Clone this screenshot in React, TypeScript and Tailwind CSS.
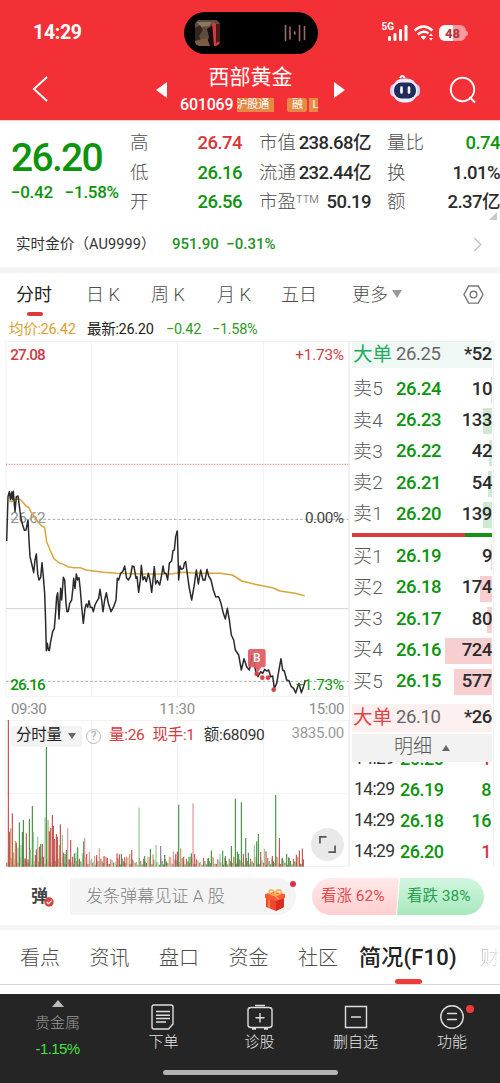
import type { ReactNode } from 'react'

const asks = [
  { label: '卖5', price: '26.24', qty: 10, bar: 1 },
  { label: '卖4', price: '26.23', qty: 133, bar: 9 },
  { label: '卖3', price: '26.22', qty: 42, bar: 3 },
  { label: '卖2', price: '26.21', qty: 54, bar: 4 },
  { label: '卖1', price: '26.20', qty: 139, bar: 9 },
]

const bids = [
  { label: '买1', price: '26.19', qty: 9, bar: 1 },
  { label: '买2', price: '26.18', qty: 174, bar: 12 },
  { label: '买3', price: '26.17', qty: 80, bar: 5 },
  { label: '买4', price: '26.16', qty: 724, bar: 47 },
  { label: '买5', price: '26.15', qty: 577, bar: 38 },
]

const ticks = [
  { price: '26.20', qty: 1, up: true },
  { price: '26.19', qty: 8, up: false },
  { price: '26.18', qty: 16, up: false },
  { price: '26.20', qty: 1, up: true },
]

// chart units: 3 per css pixel
const priceMorning =
  '20,213 24,80 28,65 31,88 35,66 37,88 40,64 42,90 45,125 49,80 54,78 57,100 60,125 64,150 68,165 73,181 78,180 82,160 84,150 87,210 90,260 96,285 101,308 105,270 109,252 113,310 117,330 122,322 126,278 130,320 134,370 137,460 139,542 142,520 145,540 148,542 152,515 158,485 163,475 167,425 170,380 173,368 177,447 180,390 182,355 185,390 190,322 194,330 198,400 201,425 205,424 209,400 215,390 219,352 221,325 225,355 229,312 233,330 237,323 241,360 245,410 250,460 255,415 259,402 263,412 267,392 271,412 276,412 280,425 285,405 290,395 296,385 300,358 305,390 309,425 314,390 319,368 325,400 333,425 341,410 348,390 352,325 356,330 362,310 368,305 374,288 380,325 385,330 391,320 397,288 402,290 408,325 411,320 416,367 421,330 424,286 429,330 434,320 439,335 445,310 450,330 455,367 460,320 463,290 467,342 472,332 479,345 485,315 489,288 493,310 498,310 503,330 508,280 515,272 519,242 523,240 527,200 532,182'
const priceAfternoon =
  '22,182 26,330 30,288 34,298 40,295 43,280 47,275 53,320 58,355 65,390 72,350 79,300 85,342 92,300 99,330 105,330 111,298 116,318 123,330 130,360 137,380 146,380 153,400 160,430 166,447 172,415 178,450 184,495 191,510 196,540 206,555 214,600 222,566 230,590 238,600 246,557 252,575 258,610 264,620 272,605 278,610 284,598 290,603 296,600 302,620 308,618 313,655 320,640 326,605 333,566 338,600 343,603 350,630 357,632 364,650 371,655 377,669 383,650 387,640 394,668 400,652 406,630'
const average =
  '28,95 32,92 36,95 42,88 60,88 70,98 78,108 86,112 94,128 104,140 115,157 124,167 134,173 140,215 150,240 162,266 178,279 192,284 206,291 222,293 240,293 258,300 280,303 310,307 350,310 400,311 450,312 510,312 550,307 590,310 660,310 697,315 725,333 765,343 820,354 840,363 885,370 914,377'

// [x, height, colour]
const spikes: [number, number, string][] = [
  [25, 440, 'r'], [28, 105, 'r'], [32, 115, 'o'], [37, 160, 'r'], [41, 43, 'o'], [46, 77, 'o'], [49, 72, 'r'], [54, 57, 'l'],
  [58, 133, 'g'], [63, 65, 'l'], [67, 104, 'g'], [70, 140, 'g'], [75, 25, 'r'], [79, 100, 'r'], [84, 22, 'r'], [88, 143, 'g'],
  [91, 52, 'l'], [97, 182, 'g'], [100, 104, 'l'], [106, 35, 'r'], [109, 52, 'r'], [113, 90, 'l'], [118, 60, 'r'], [122, 68, 'g'],
  [127, 68, 'r'], [130, 30, 'r'], [135, 148, 'l'], [139, 362, 'g'], [144, 140, 'o'], [148, 106, 'r'], [152, 116, 'r'],
  [157, 155, 'r'], [160, 122, 'r'], [164, 83, 'r'], [169, 98, 'r'], [172, 90, 'r'], [178, 65, 'o'], [181, 127, 'r'], [187, 96, 'l'],
  [190, 42, 'r'], [195, 38, 'g'], [199, 50, 'g'], [203, 115, 'p'], [208, 22, 'r'], [212, 80, 'r'], [218, 30, 'r'], [223, 40, 'g'],
  [228, 42, 'l'], [233, 58, 'g'], [238, 20, 'r'], [247, 40, 'l'], [251, 76, 'g'], [254, 87, 'p'], [260, 38, 'r'], [268, 45, 'p'],
  [275, 24, 'l'], [284, 32, 'p'], [290, 35, 'r'], [298, 55, 'p'], [312, 32, 'r'], [322, 26, 'r'], [351, 40, 'r'], [358, 37, 'r'],
  [364, 38, 'g'], [374, 28, 'r'], [389, 38, 'o'], [395, 50, 'r'], [417, 177, 'l'], [434, 32, 'g'], [451, 54, 'g'], [459, 37, 'o'],
  [468, 65, 'l'], [482, 62, 'b'], [494, 35, 'g'], [520, 46, 'p'], [527, 38, 'r'], [532, 45, 'r'], [536, 186, 'g'], [542, 55, 'o'],
  [551, 30, 'r'], [567, 30, 'g'], [574, 40, 'g'], [579, 190, 'p'], [584, 38, 'r'], [625, 26, 'g'], [634, 48, 'g'], [660, 38, 'l'],
  [668, 48, 'g'], [676, 32, 'g'], [694, 62, 'g'], [706, 204, 'g'], [712, 45, 'g'], [716, 38, 'g'], [724, 193, 'g'], [730, 38, 'r'],
  [737, 86, 'g'], [745, 42, 'g'], [763, 66, 'l'], [770, 76, 'g'], [775, 98, 'g'], [782, 44, 'r'], [793, 54, 'l'], [798, 46, 'r'],
  [817, 32, 'r'], [827, 215, 'g'], [838, 86, 'r'], [847, 26, 'g'], [860, 38, 'g'], [866, 28, 'g'], [889, 36, 'r'], [898, 48, 'r'], [907, 54, 'r'],
]
const volumeColors: Record<string, string> = {
  r: '#c0504d',
  g: '#3f9140',
  l: '#8fc78f',
  o: '#c9965a',
  p: '#e58f92',
  b: '#7d7aa5',
}
const small = [12, 22, 9, 30, 16, 7, 26, 14, 19, 8, 28, 11, 24, 17, 6]
const smallColors = 'rgrrlgorgrplrgg'

function Arrow({ className, points }: { className: string; points: string }) {
  return (
    <svg viewBox="0 0 12 16" className={className} fill="currentColor">
      <polygon points={points} />
    </svg>
  )
}

function StatusBar() {
  return (
    <div className="flex h-[66px] items-center justify-between pl-[33px] pr-8">
      <span className="w-[150px] text-[19.5px] font-bold tracking-[-0.3px]">14:29</span>
      <div className="flex h-[42px] w-[134px] items-center justify-between rounded-full bg-black pl-[11px] pr-[12px]">
        <svg viewBox="0 0 25 26" className="h-[26px] w-[25px]">
          <defs>
            <clipPath id="cover"><rect width="25" height="26" rx="5" /></clipPath>
          </defs>
          <g clipPath="url(#cover)">
            <rect width="25" height="26" fill="#5e4c3f" />
            <path d="M2 2H17L14 6 5 7Z" fill="#8a7863" />
            <path d="M0 8 5 5 8 10 4 16 7 23 0 26Z" fill="#332621" />
            <path d="M12 9 18 5 19 26H11L14 17Z" fill="#160d0e" />
            <path d="M0 21 12 18 15 26H0Z" fill="#7d5a45" />
            <path d="M17 2 21 4 21 24 25 21V26H19Z" fill="#d5373c" />
            <path d="M21 4h4v18h-4Z" fill="#49191c" />
          </g>
        </svg>
        <svg viewBox="0 0 22 18" className="h-[18px] w-[22px]" strokeWidth="1.6" strokeLinecap="round">
          <path d="M1.500 1.500V16.500M20.500 2.500V15.500" stroke="#8d706b" />
          <path d="M6 3V15M15.500 1.500V16.500" stroke="#a9635a" />
          <path d="M10.700 8V10" stroke="#a78178" />
        </svg>
      </div>
      <div className="flex w-[150px] items-center justify-end">
        <span className="mb-[12px] text-[10px] font-bold leading-none">5G</span>
        <svg viewBox="0 0 22 18" className="-ml-[7px] h-[18px] w-[22px]" fill="white">
          <rect x="1" y="12" width="3" height="5" rx="1" />
          <rect x="6.500" y="9" width="3" height="8" rx="1" />
          <rect x="12" y="5" width="3" height="12" rx="1" />
          <rect x="17.500" y="1" width="3" height="16" rx="1" />
        </svg>
        <svg viewBox="0 0 22 18" className="ml-[4px] h-[18px] w-[22px]" fill="none" stroke="white" strokeWidth="2.600">
          <path d="M1.500 6.500Q10.500-1.500 19.500 6.500M4.800 10.500Q10.500 5.500 15.500 9.500" />
          <path d="M10.500 16 7.500 12.800Q10.500 10.500 13.500 12.800Z" fill="white" stroke="none" />
          <path d="M16 12 18 9.500 20 12ZM16 14 18 16.500 20 14Z" fill="white" stroke="none" />
        </svg>
        <div className="ml-[4px] flex h-[16px] w-[27px] items-center justify-center rounded-[6px] bg-[linear-gradient(90deg,#fff_50%,#f89a9d_50%)] text-[13px] font-extrabold leading-none text-[#bd3438]">48</div>
        <span className="h-[5px] w-[2px] rounded-r bg-[#f89a9d]" />
      </div>
    </div>
  )
}

function Header() {
  return (
    <header className="h-[120px] shrink-0 bg-[#f23035] text-white">
      <StatusBar />
      <div className="flex h-[47px] items-center">
        <svg viewBox="0 0 16 28" className="ml-8 -mt-[2px] h-[28px] w-[16px]" fill="none" stroke="white" strokeWidth="2">
          <path d="M15 2 2 14 15 26" />
        </svg>
        <Arrow className="ml-[108px] h-[16px] w-[12px]" points="11,0 0,8 11,16" />
        <div className="ml-[12px] flex w-[141px] flex-col items-center">
          <h1 className="text-[21px] leading-[24px]">西部黄金</h1>
          <div className="mt-[7px] flex h-[19px] w-full items-center overflow-hidden">
            <span className="text-[16px] font-medium tracking-[-0.2px]">601069</span>
            <span className="ml-[4px] flex h-[14px] w-[37px] justify-end overflow-hidden whitespace-nowrap bg-[#e58a45] pr-[5px] text-[11px] leading-[14px]">沪股通</span>
            <span className="ml-[13px] h-[14px] w-[20px] rounded-[2px] bg-[#e58a45] text-center text-[11px] leading-[14px]">融</span>
            <span className="ml-[2px] h-[14px] w-[9px] bg-[#e58a45] pl-[3px] text-[11px] leading-[14px]">L</span>
          </div>
        </div>
        <Arrow className="ml-[12px] h-[16px] w-[12px]" points="1,0 12,8 1,16" />
        <svg viewBox="0 0 30 30" className="ml-[45px] -mt-[2px] h-[30px] w-[30px]">
          <path d="M10 4Q12 0 15 4" fill="none" stroke="#fff" strokeWidth="2" />
          <rect x="0" y="10" width="30" height="13" rx="5" fill="#cfcafb" />
          <rect x="2.500" y="4.500" width="25" height="24" rx="11" fill="#eeeaff" />
          <rect x="4" y="8.500" width="22" height="16" rx="7.500" fill="#202c59" />
          <path d="M11.500 13.500v5M19 13.500v5" stroke="#fff" strokeWidth="2.600" strokeLinecap="round" />
        </svg>
        <svg viewBox="0 0 28 28" className="ml-[29px] h-[28px] w-[28px]" fill="none" stroke="white" strokeWidth="1.900">
          <circle cx="13.500" cy="13.500" r="11.700" />
          <path d="M20.500 21 26 26.500" />
        </svg>
      </div>
    </header>
  )
}

function Stat({ label, value, tone = 'text-[#2b2b2b]' }: { label: ReactNode; value: string; tone?: string }) {
  return (
    <div className="flex items-center justify-between whitespace-nowrap">
      <span className="text-[18.5px] font-light text-[#505050]">{label}</span>
      <span className={`text-[18.5px] font-medium tracking-[-0.55px] ${tone}`}>{value}</span>
    </div>
  )
}

function Quote() {
  return (
    <section className="flex h-[99px] shrink-0 border-t border-[#ffd0cc] pt-[8px]">
      <div className="w-[130px] pl-[11px] pt-[9px] text-[#0d940d]">
        <div className="text-[39px] font-medium leading-[40px] tracking-[-1.7px]">26.20</div>
        <div className="mt-[4px] flex gap-[12px] whitespace-nowrap text-[17px] font-medium leading-[20px] tracking-[-0.3px]">
          <span>−0.42</span>
          <span>−1.58%</span>
        </div>
      </div>
      <div className="grid h-[89px] w-[112px] grid-rows-3">
        <Stat label="高" value="26.74" tone="text-[#d73535]" />
        <Stat label="低" value="26.16" tone="text-[#0d940d]" />
        <Stat label="开" value="26.56" tone="text-[#0d940d]" />
      </div>
      <div className="ml-[17px] grid h-[89px] w-[112px] grid-rows-3">
        <Stat label="市值" value="238.68亿" />
        <Stat label="流通" value="232.44亿" />
        <Stat label={<>市盈<sup className="text-[11px]">TTM</sup></>} value="50.19" />
      </div>
      <div className="ml-[16px] grid h-[89px] w-[113px] grid-rows-3">
        <Stat label="量比" value="0.74" tone="text-[#0d940d]" />
        <Stat label="换" value="1.01%" />
        <Stat label="额" value="2.37亿" />
      </div>
    </section>
  )
}

function GoldRow() {
  return (
    <div className="relative flex h-[48px] shrink-0 items-center pl-4 pr-[18px] pt-[3px] text-[15px]">
      <span className="w-[156px] whitespace-nowrap text-[14.5px] tracking-[0.1px] text-[#333]">实时金价（AU9999）</span>
      <span className="font-medium text-[#249324]">951.90&nbsp; −0.31%</span>
      <svg viewBox="0 0 9 16" className="ml-auto h-[15px] w-[9px]" fill="none" stroke="#c4c4c4" strokeWidth="1.500">
        <path d="M1 1 8 8 1 15" />
      </svg>
      <svg viewBox="0 0 8 8" className="absolute -top-[7px] right-[3px] h-[8px] w-[8px]">
        <path d="M8 0V8H0Z" fill="#c8c8c8" />
      </svg>
    </div>
  )
}

function PeriodTabs() {
  return (
    <nav className="flex h-[48px] shrink-0 text-[18px] font-light text-[#4c4c4c]">
      <div className="ml-4 flex w-[70px] flex-col pt-[9px] text-[#222]">
        <span className="font-normal leading-[26px]">分时</span>
        <span className="ml-[11px] mt-[4px] h-[4px] w-[16px] rounded-full bg-[#dc3a3a]" />
      </div>
      <span className="w-[65px] pt-[9px] leading-[26px]">日 K</span>
      <span className="w-[66px] pt-[9px] leading-[26px]">周 K</span>
      <span className="w-[64px] pt-[9px] leading-[26px]">月 K</span>
      <span className="w-[71px] pt-[9px] leading-[26px]">五日</span>
      <span className="flex pt-[9px] leading-[26px]">
        更多
        <svg viewBox="0 0 10 8" className="ml-[4px] mt-[8px] h-[8px] w-[10px]"><path d="M0 0H10L5 8Z" fill="#999" /></svg>
      </span>
      <svg viewBox="0 0 22 22" className="ml-auto mr-4 mt-[11px] h-[21px] w-[21px]" fill="none" stroke="#777" strokeWidth="1.500">
        <path d="M6 2H16L21 11 16 20H6L1 11Z" strokeLinejoin="round" />
        <circle cx="11" cy="11" r="3.500" />
      </svg>
    </nav>
  )
}

function PriceChart() {
  return (
    <svg viewBox="0 0 1050 1068" className="h-[356px] w-[350px] shrink-0" fontSize="46" fontWeight="500" fontFamily="Roboto">
      <g fill="none" stroke="#f1f1f1" strokeWidth="3">
        <path d="M18 2H1045M18 0V1068M274 0V1068M532 0V1068M790 0V1068M1045 0V1068M18 1067H1045" />
        <path d="M18 803H1045" stroke="#d0d0d0" />
        <path d="M18 535H1045" stroke="#aaa" strokeDasharray="8 6" />
        <path d="M18 1021H1045" stroke="#9fb79f" strokeDasharray="8 6" />
        <path d="M18 370H1045" stroke="#dc8272" strokeDasharray="4 4" />
      </g>
      <text x="31" y="546" fill="#8f8f98" fontWeight="400" textLength="106">26.62</text>
      <text x="915" y="546" fill="#444" fontWeight="400" textLength="117">0.00%</text>
      <g fill="none" strokeWidth="4.500" strokeLinejoin="round">
        <polyline points={average} transform="translate(0 387)" stroke="#d9a63a" />
        <polyline points={priceMorning} transform="translate(0 387)" stroke="#2a2a2a" />
        <polyline points={priceAfternoon} transform="translate(510 387)" stroke="#2a2a2a" />
      </g>
      <g fill="#dc4048">
        <path d="M752 924H790Q797 924 797 931V972Q797 979 790 979H784L772 995 765 979H752Q744 979 744 972V931Q744 924 752 924Z" fill="#e0555c" fillOpacity="0.9" />
        <circle cx="770" cy="998" r="7" />
        <circle cx="787" cy="1010" r="7" />
        <circle cx="804" cy="1010" r="7" />
        <circle cx="821" cy="1046" r="7" />
      </g>
      <text x="759" y="964" fill="white" fontSize="36">B</text>
      <text x="31" y="57" fill="#d03a43" textLength="106">27.08</text>
      <text x="886" y="57" fill="#d03a43" fontWeight="400" textLength="146">+1.73%</text>
      <text x="31" y="1047" fill="#0d940d" textLength="106">26.16</text>
      <text x="886" y="1047" fill="#0d940d" fontWeight="400" textLength="146">−1.73%</text>
    </svg>
  )
}

function VolumeChart() {
  return (
    <div className="relative h-[147px] w-[350px] shrink-0">
      <svg viewBox="0 0 1050 441" className="h-[147px] w-[350px]">
        <path d="M18 1H1045M18 220H1045M18 439H1045M18 0V440M274 0V440M532 0V440M790 0V440M1045 0V440" stroke="#f1f1f1" strokeWidth="3" />
        {Array.from({ length: 209 }, (_, i) => {
          const h = small[(i * 7) % 15]
          return <rect key={i} x={18.5 + i * 4.28} y={440 - h} width="3" height={h} fill={volumeColors[smallColors[(i * 4) % 15]]} />
        })}
        {spikes.map(([x, h, c]) => (
          <rect key={x} x={x - 1.6} y={440 - h} width="3.4" height={h} fill={volumeColors[c]} />
        ))}
      </svg>
      <div className="absolute left-[11px] right-[6px] top-[5px] flex h-[22px] items-center whitespace-nowrap text-[15.5px] tracking-[-0.3px]">
        <span className="flex h-[21px] w-[71px] items-center rounded-[3px] bg-[#f3f3f3] pl-[5px] text-[#222]">
          分时量
          <svg viewBox="0 0 8 6" className="ml-[6px] h-[6px] w-[8px]"><path d="M0 0H8L4 6Z" fill="#666" /></svg>
        </span>
        <span className="ml-[4px] flex h-[15px] w-[15px] items-center justify-center rounded-full border border-[#bbb] text-[12px] leading-none text-[#aaa]">?</span>
        <span className="ml-[8px] text-[#d63a3f]">量:26</span>
        <span className="ml-[8px] text-[#d63a3f]">现手:1</span>
        <span className="ml-[9px] text-[#333]">额:68090</span>
        <span className="mb-[5px] ml-auto text-[15px] text-[#999]">3835.00</span>
      </div>
      <div className="absolute left-[311px] top-[108px] flex h-[33px] w-[33px] items-center justify-center rounded-full bg-[#e9e9e9]">
        <svg viewBox="0 0 18 18" className="h-[17px] w-[17px]" fill="none" stroke="#555" strokeWidth="1.800">
          <path d="M1 8V1H8M17 10V17H10" />
        </svg>
      </div>
    </div>
  )
}

function BookRow({ row, tone }: { row: (typeof asks)[number]; tone: string }) {
  return (
    <div className="relative flex h-[31.25px] items-center pl-[1px] text-[18.5px] font-medium tracking-[-0.4px]">
      <span className={`absolute right-0 top-[3px] h-[26px] ${tone}`} style={{ width: row.bar }} />
      <span className="w-[43px] text-[19px] font-light tracking-[0.3px] text-[#585858]">{row.label}</span>
      <span className="text-[#0d940d]">{row.price}</span>
      <span className="relative ml-auto text-[#2b2b2b]">{row.qty}</span>
    </div>
  )
}

function BigOrder({ price, qty, className }: { price: string; qty: string; className: string }) {
  return (
    <div className={`flex shrink-0 items-center pl-[1px] text-[18.5px] tracking-[-0.4px] ${className}`}>
      <span className="w-[43px] text-[19.5px] tracking-normal">大单</span>
      <span className="text-[#666]">{price}</span>
      <span className="ml-auto font-medium text-[#2b2b2b]">{qty}</span>
    </div>
  )
}

function OrderBook() {
  return (
    <aside className="-ml-[1px] flex h-[526px] w-[145px] flex-col border-x border-t border-[#f1f1f1] pl-[2px] pr-[1px]">
      <BigOrder price="26.25" qty="*52" className="h-[26px] bg-[#f0f8f5] text-[#20ad5b]" />
      <div className="pt-[6px]">
        {asks.map((row) => <BookRow key={row.label} row={row} tone="bg-[#cfe9d2]" />)}
      </div>
      <div className="mt-[3px] flex h-[4px] shrink-0">
        <span className="w-[113px] bg-[#dc3a3e]" />
        <span className="flex-1 bg-[#159315]" />
      </div>
      <div className="pt-[4px]">
        {bids.map((row) => <BookRow key={row.label} row={row} tone="bg-[#f8cfd1]" />)}
      </div>
      <BigOrder price="26.10" qty="*26" className="mt-[6px] h-[28px] bg-[#fdf0f0] text-[#e04545]" />
      <div className="mt-[2px] flex h-[28px] shrink-0 items-center justify-center gap-[10px] bg-[#f2f2f2] text-[19px] font-light text-[#555]">
        明细
        <svg viewBox="0 0 8 6" className="h-[6px] w-[8px]"><path d="M0 6H8L4 0Z" fill="#666" /></svg>
      </div>
      {/* newest tick sits at the bottom, older ones slide under the title */}
      <div className="flex min-h-0 flex-1 flex-col justify-end overflow-hidden">
        {ticks.map((t, i) => (
          <div key={i} className="flex h-[31px] shrink-0 items-center pl-[2px] pr-[1px] text-[18px] font-medium tracking-[-0.5px]">
            <span className="w-[46px] text-[17.5px] font-normal tracking-[-0.6px] text-[#333]">14:29</span>
            <span className="text-[#0d940d]">{t.price}</span>
            <span className={t.up ? 'ml-auto text-[#d63a3f]' : 'ml-auto text-[#0d940d]'}>{t.qty}</span>
          </div>
        ))}
      </div>
    </aside>
  )
}

function Danmu() {
  return (
    <div className="flex h-[58px] shrink-0 items-start pl-4 pt-[11px]">
      <div className="relative flex h-[37px] w-[280px] items-center rounded-full bg-[linear-gradient(90deg,#fff_54px,#f4f4f4_54px)]">
        <span className="ml-[15px] text-[17px] font-bold text-[#444]">弹</span>
        <svg viewBox="0 0 10 10" className="-ml-[4px] mt-[10px] h-[10px] w-[10px]">
          <circle cx="5" cy="5" r="4.700" fill="#d9453f" />
          <path d="M2.700 5 4.500 6.700 7.500 3.600" fill="none" stroke="#fff" strokeWidth="1.200" />
        </svg>
        <span className="ml-[32px] text-[17px] font-light tracking-[0.1px] text-[#808080]">发条弹幕见证 A 股</span>
        <svg viewBox="0 0 22 22" className="absolute left-[248px] top-[11px] h-[22px] w-[22px]">
          <path d="M2 8 11 10 20 8V18L12 22 2 18Z" fill="#f0452f" />
          <path d="M12 10 20 8V18L12 22Z" fill="#d92d22" />
          <path d="M1 5 10 3 21 5V9L12 12 1 9Z" fill="#fa5a36" />
          <path d="M11 6C4 6 4 0 8 1Q11 2 11 5Q12 1 15 1C19 1 18 6 11 6Z" fill="none" stroke="#f5b659" strokeWidth="1.800" />
          <path d="M5 10.500V19M8 4 15 10.500" stroke="#f8a84f" strokeWidth="1.200" />
        </svg>
        <span className="absolute right-0 top-[3px] h-[6px] w-[6px] rounded-full bg-[#d9304a]" />
      </div>
      <div className="ml-4 flex h-[37px] w-[172px] items-center overflow-hidden whitespace-nowrap rounded-full text-[15.5px]">
        <div className="flex h-full w-[87px] items-center bg-gradient-to-b from-[#ffeaea] to-[#ffcfd0] pl-[9px] text-[#e34949] [clip-path:polygon(0_0,100%_0,calc(100%-3px)_100%,0_100%)]">看涨 62%</div>
        <div className="-ml-[2px] flex h-full flex-1 items-center bg-gradient-to-b from-[#d3f6df] to-[#a6e9bd] pl-[10px] text-[#25a04c] [clip-path:polygon(3px_0,100%_0,100%_100%,0_100%)]">看跌 38%</div>
      </div>
    </div>
  )
}

function SectionTabs() {
  return (
    <nav className="relative flex h-[55px] shrink-0 whitespace-nowrap border-b border-[#d8d8d8] pl-5 pt-[13px] text-[20px] font-light leading-[30px] text-[#4c4c4c]">
      <span className="w-[69.500px]">看点</span>
      <span className="w-[69.500px]">资讯</span>
      <span className="w-[69.500px]">盘口</span>
      <span className="w-[69.500px]">资金</span>
      <span className="w-[61px]">社区</span>
      <span className="w-[121px] text-[22px] font-medium tracking-[0.2px] text-[#222]">简况(F10)</span>
      <span className="bg-gradient-to-r from-[#bbb] to-[#eee] bg-clip-text text-transparent">财</span>
      <span className="absolute bottom-0 left-[395px] h-[5px] w-[27px] rounded-full bg-[#ee3d38]" />
    </nav>
  )
}

function ToolItem({ label, className, children }: { label: string; className: string; children: ReactNode }) {
  return (
    <div className={`flex flex-col items-center pt-[10px] text-[15px] text-[#e6e6e6] ${className}`}>
      <svg viewBox="0 0 26 26" className="h-[26px] w-[26px]" fill="none" stroke="#dedede" strokeWidth="1.400">{children}</svg>
      <span className="mt-[1px] font-light leading-[22px]">{label}</span>
    </div>
  )
}

function BottomBar() {
  return (
    <footer className="mt-[9px] flex h-[89px] shrink-0 flex-col bg-[#252525]">
      <div className="flex h-[76px]">
        <div className="flex w-[115px] flex-col items-center pt-[6px] text-[15px]">
          <svg viewBox="0 0 12 7" className="h-[7px] w-[12px]"><path d="M0 7H12L6 0Z" fill="#bbb" /></svg>
          <span className="mt-[5px] font-light leading-[22px] text-[#999]">贵金属</span>
          <span className="mt-[4px] font-['Liberation_Sans'] leading-[22px] tracking-[-0.600px] text-[#42e342]">-1.15%</span>
        </div>
        <ToolItem label="下单" className="w-[97px]">
          <path d="M4 1H20Q22 1 22 3V20L17.500 25H3Q1 25 1 23V3Q1 1 3 1ZM5 7.500H19M5 11.200H19M5 14.500H19M5 18H15" />
        </ToolItem>
        <ToolItem label="诊股" className="w-[95px]">
          <path d="M8 1.500H18M4 3.500H22Q25 3.500 25 6V21Q25 23.500 22 23.500H4Q1 23.500 1 21V6Q1 3.500 4 3.500ZM13 9V18.500M8.500 13.700H17.500M5 25H9M17 25H21" />
        </ToolItem>
        <ToolItem label="删自选" className="w-[97px]">
          <path d="M2.500 2.500H23.500V23.500H2.500ZM8 13H18" />
        </ToolItem>
        <div className="relative">
          <ToolItem label="功能" className="w-[96px]">
            <circle cx="13" cy="13" r="11.200" />
            <path d="M8 9.500H18M8 15.500H18" />
          </ToolItem>
          <span className="absolute left-[62px] top-[11px] h-[8px] w-[8px] rounded-full bg-[#f03b3b]" />
        </div>
      </div>
      <div className="mx-auto h-[5px] w-[175px] rounded-full bg-[#b4b4b4]" />
    </footer>
  )
}

export default function App() {
  return (
    <main className="flex h-[1083px] w-[500px] flex-col overflow-hidden bg-white font-[Roboto,'Noto_Sans_CJK_SC',sans-serif]">
      <Header />
      <Quote />
      <GoldRow />
      <div className="h-[6px] shrink-0 bg-[#f4f4f4]" />
      <PeriodTabs />
      <div className="flex h-[20px] shrink-0 items-center whitespace-nowrap pb-[2px] pl-[9px] text-[14.5px] tracking-[-0.3px]">
        <span className="w-[78px] text-[#dda02e]">均价:26.42</span>
        <span className="w-[79px] text-[#222]">最新:26.20</span>
        <span className="w-[46px] text-[#2f9a23]">−0.42</span>
        <span className="text-[#2f9a23]">−1.58%</span>
      </div>
      <div className="flex shrink-0">
        <div className="flex w-[350px] flex-col">
          <PriceChart />
          <div className="flex h-[23px] items-center justify-between pl-[11px] pr-[6px] pt-[2px] text-[15px] tracking-[-0.4px] text-[#8c8c8c]">
            <span>09:30</span>
            <span className="-ml-[1px]">11:30</span>
            <span>15:00</span>
          </div>
          <VolumeChart />
        </div>
        <OrderBook />
      </div>
      <Danmu />
      <div className="h-[5px] shrink-0 bg-[#f4f4f4]" />
      <SectionTabs />
      <BottomBar />
    </main>
  )
}
